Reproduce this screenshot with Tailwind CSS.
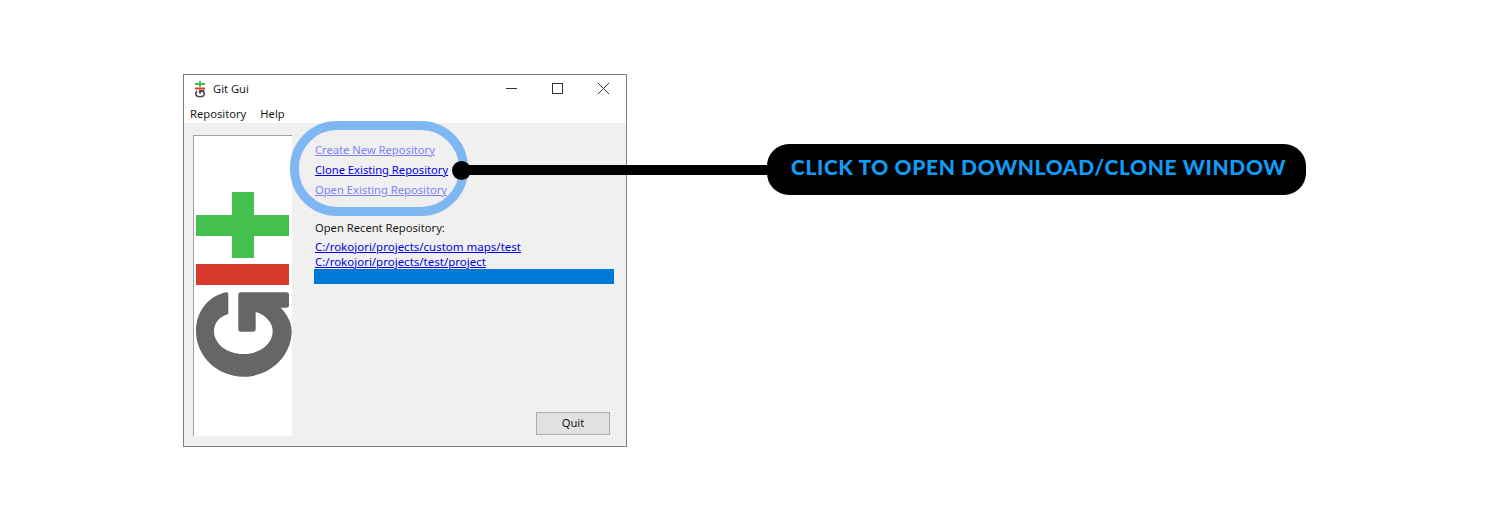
<!DOCTYPE html>
<html lang="en">
<head>
  <meta charset="UTF-8" />
  <title>Git Gui clone callout</title>
  <script src="https://cdn.jsdelivr.net/npm/@tailwindcss/browser@4"></script>
</head>
<body class="bg-white">
  <div class="relative w-[1493px] h-[520px] overflow-hidden pl-[183px] pt-[74px] font-['Noto_Sans',sans-serif] text-[11.2px] text-[#1a1a1a]">

    <!-- Git Gui window -->
    <div class="w-[444px] h-[373px] border border-[#7f7f7f] bg-white flex flex-col">
      <!-- title bar -->
      <div class="h-[28px] flex items-center pl-[10px] shrink-0">
        <svg class="w-[12px] h-[17px]" viewBox="0 0 12 17">
          <path d="M5 0h2v2h4v2H7v2H5V4H1V2h4z" fill="#43c04d"/>
          <rect x="1" y="6.500" width="10" height="2" fill="#d93a2e"/>
          <path d="M3 9.500c-1.500.5-2 2-2 3.500 0 2 2 3.500 5 3.500s5-1.500 5-3.500c0-1.500-.5-2.500-1.500-3h1V9H5v3.500h2V11h1.500c.5.500 1 1.200 1 2 0 1-1.500 2-3.500 2s-3.500-1-3.500-2c0-.8.300-1.500 1-2z" fill="#444"/>
        </svg>
        <span class="ml-[7px]">Git Gui</span>
        <div class="ml-auto flex items-center">
          <svg class="w-[46px] h-[24px]" viewBox="0 0 46 24"><path d="M18 11.500h11" stroke="#333" stroke-width="1"/></svg>
          <svg class="w-[46px] h-[24px]" viewBox="0 0 46 24"><rect x="18.500" y="6.500" width="10" height="10" fill="none" stroke="#333" stroke-width="1"/></svg>
          <svg class="w-[46px] h-[24px]" viewBox="0 0 46 24"><path d="M18 6l11 11M29 6L18 17" stroke="#333" stroke-width="1"/></svg>
        </div>
      </div>
      <!-- menu -->
      <div class="h-[20px] flex items-center gap-[14px] pl-[6px] pt-[3px] shrink-0">
        <span>Repository</span>
        <span>Help</span>
      </div>
      <!-- client -->
      <div class="flex-1 bg-[#f0f0f0] flex pl-[9px] pt-[12px] pb-[10px]">
        <div class="w-[99px] bg-white border-l border-t border-[#a0a0a0]">
          <svg class="w-[98px] h-[300px]" viewBox="194 136 98 300">
            <path d="M232 192h22v23h35v21h-35v22h-22v-22h-36v-21h36z" fill="#43c04d"/>
            <rect x="196" y="264" width="93" height="21" fill="#d93a2e"/>
            <path d="M226 292.300q2.300-.3 2.300 2V314C219 317 214 323 214 331C214 344 227 354 243.400 354C260 354 272.700 344 272.700 331C272.700 323 266 315 255.700 312V329q0 2.700-2.700 2.700H241q-2.700 0-2.700-2.700V295q0-2.700 2.700-2.700H286q3 0 3 2.700V305q0 2.700-3 2.700H280.700C287 314 291.700 323 291.700 331C291.700 356 270 376.700 243.700 376.700C217 376.700 196 356 196 331C196 311 209 296 226 292.300Z" fill="#666"/>
          </svg>
        </div>
        <div class="ml-[22px] flex-1 flex flex-col">
          <div class="mt-[6px] pl-[1px] flex flex-col items-start gap-[3px]">
            <a class="underline text-[#8080f0] h-[17px] leading-[17px]">Create New Repository</a>
            <a class="underline text-[#0000e0] h-[17px] leading-[17px]">Clone Existing Repository</a>
            <a class="underline text-[#8080f0] h-[17px] leading-[17px]">Open Existing Repository</a>
          </div>
          <div class="mt-[21px] pl-[1px] h-[17px] leading-[17px]">Open Recent Repository:</div>
          <div class="mt-[3px] pl-[1px] flex flex-col items-start text-[11.500px]">
            <a class="underline text-[#0000e0] h-[15px] leading-[15px]">C:/rokojori/projects/custom maps/test</a>
            <a class="underline text-[#0000e0] h-[15px] leading-[15px]">C:/rokojori/projects/test/project</a>
          </div>
          <div class="w-[300px] h-[15px] bg-[#0078d7]"></div>
          <button class="mt-auto mb-[1px] ml-[222px] w-[74px] h-[23px] bg-[#e1e1e1] border border-[#adadad] text-center">Quit</button>
        </div>
      </div>
    </div>

    <!-- callout overlays -->
    <div class="absolute left-[290px] top-[121px] w-[178px] h-[95px] rounded-[47px] border-[9px] border-[#7fb7f3]"></div>
    <div class="absolute left-[460px] top-[165px] w-[310px] h-[10px] bg-black"></div>
    <div class="absolute left-[452px] top-[161px] w-[19px] h-[19px] rounded-full bg-black"></div>
    <div class="absolute left-[767px] top-[144px] w-[539px] h-[51px] rounded-[22px] bg-black flex items-center justify-center pb-[5px] pl-[4px] font-['Lato',sans-serif] font-black text-[21px] tracking-[0.6px] text-[#0f9cf5] whitespace-nowrap">CLICK TO OPEN DOWNLOAD/CLONE WINDOW</div>
  </div>
</body>
</html>
